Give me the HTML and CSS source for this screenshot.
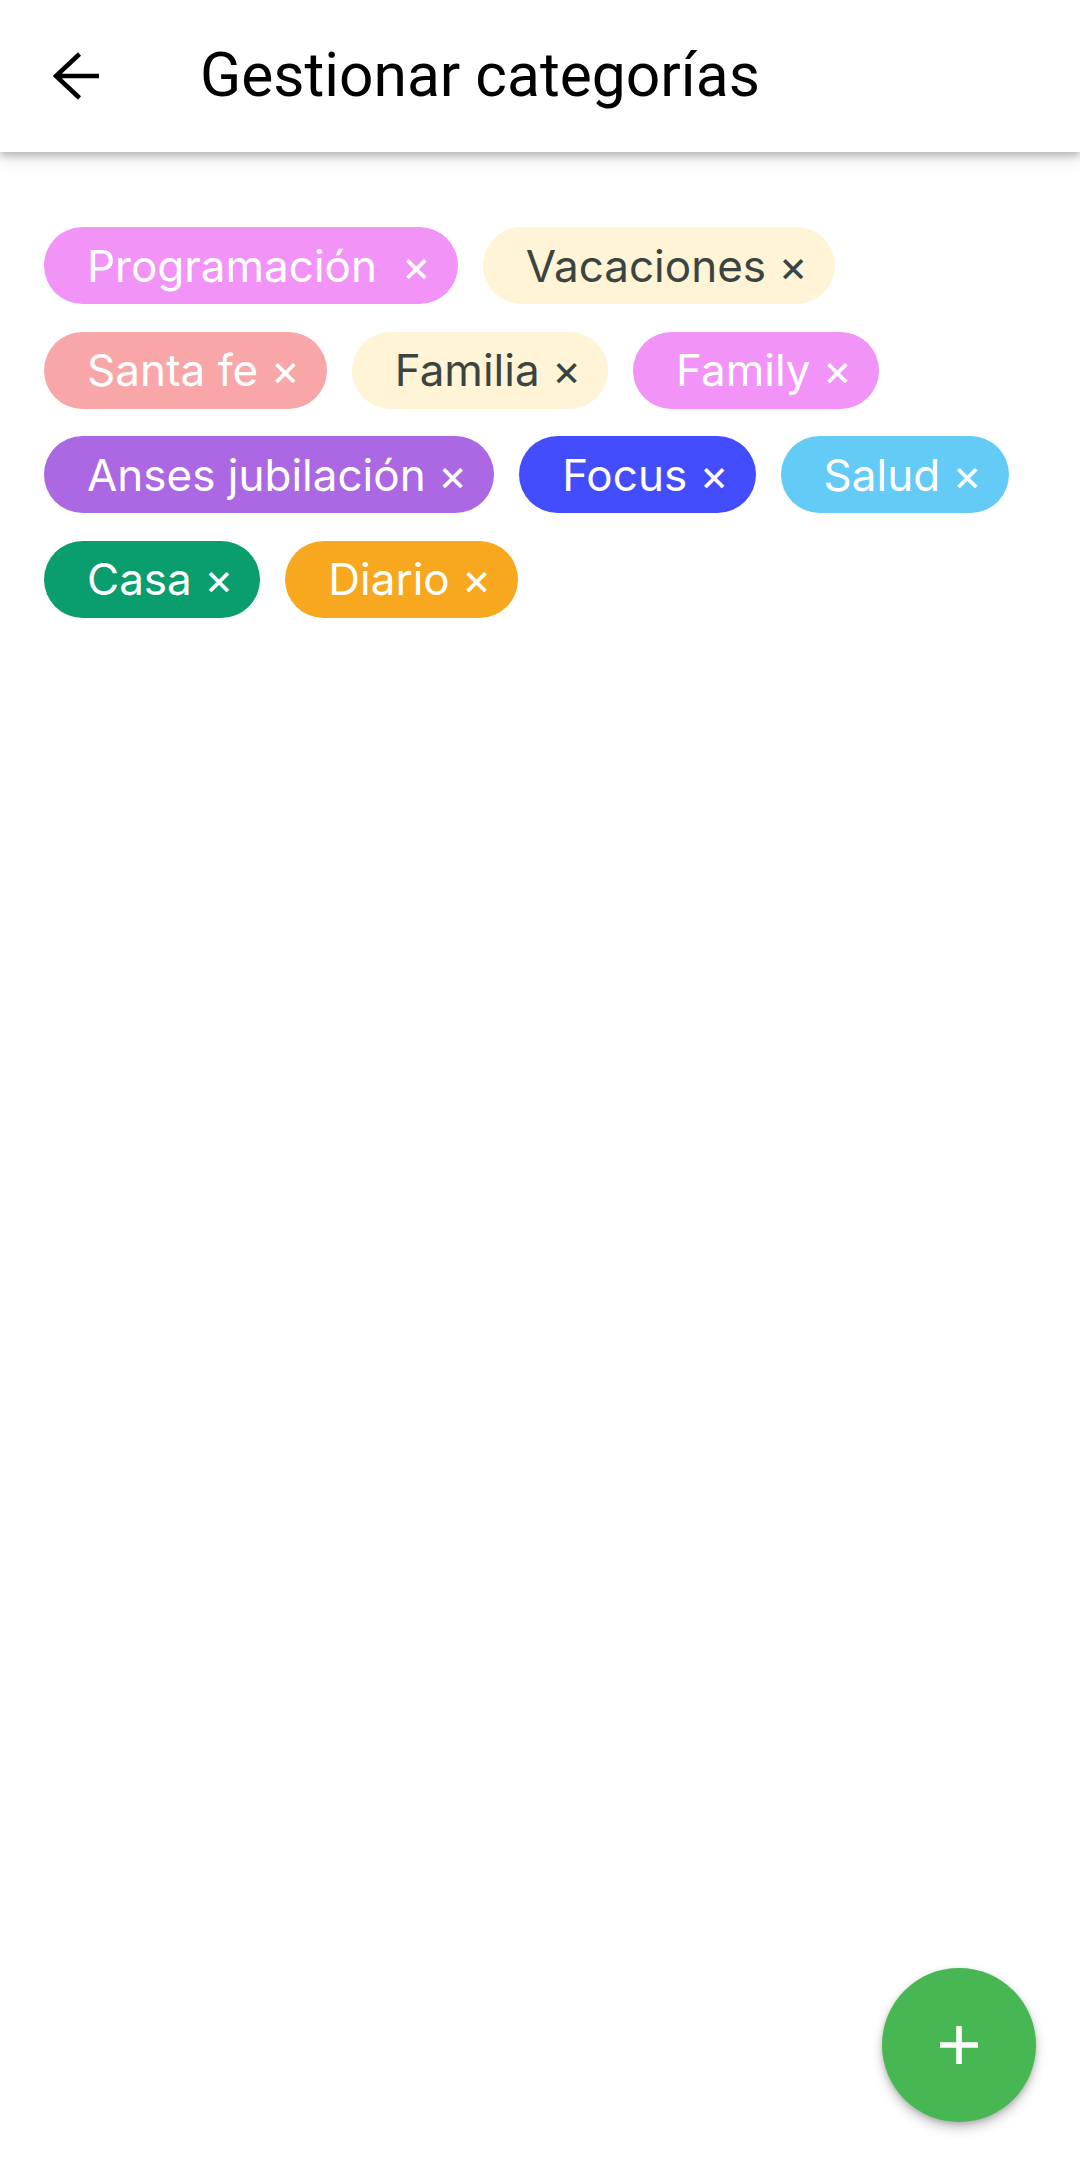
FILE: index.html
```html
<!DOCTYPE html>
<html lang="es">
<head>
<meta charset="utf-8">
<title>Gestionar categorías</title>
<link rel="stylesheet" href="styles.css">
</head>
<body>
<div class="screen">
  <header class="appbar">
    <div class="back">
      <svg width="66" height="66" viewBox="0 0 66 66" aria-hidden="true">
        <path d="M55 33 H12 M35.5 11 L12 33 L35.5 55" fill="none" stroke="#000" stroke-width="4.5" stroke-linecap="butt" stroke-linejoin="miter"/>
      </svg>
    </div>
    <h1 class="title">Gestionar categorías</h1>
  </header>
  <main class="content">
    <div class="chips">
      <span class="chip pink">Programación&nbsp; ×</span>
      <span class="chip cream">Vacaciones ×</span>
      <span class="chip salmon">Santa fe ×</span>
      <span class="chip cream">Familia ×</span>
      <span class="chip pink">Family ×</span>
      <span class="chip purple">Anses jubilación ×</span>
      <span class="chip blue">Focus ×</span>
      <span class="chip sky">Salud ×</span>
      <span class="chip green">Casa ×</span>
      <span class="chip orange">Diario ×</span>
    </div>
  </main>
  <button class="fab" aria-label="Agregar">
    <svg width="40" height="40" viewBox="0 0 40 40" aria-hidden="true">
      <path d="M20 1 V39 M1 20 H39" stroke="#fff" stroke-width="5.6"/>
    </svg>
  </button>
</div>
</body>
</html>
```
FILE: styles.css
```css
* { box-sizing: border-box; }
html, body {
  margin: 0;
  padding: 0;
  background: #fff;
}
.screen {
  position: relative;
  width: 1080px;
  height: 2157px;
  background: #fff;
  overflow: hidden;
}
.appbar {
  display: flex;
  align-items: center;
  height: 152px;
  padding-left: 44px;
  background: #fff;
  box-shadow: 0 4px 7px rgba(0,0,0,0.22), 0 9px 16px rgba(0,0,0,0.09);
  position: relative;
  z-index: 2;
}
.back {
  width: 66px;
  height: 66px;
  display: flex;
}
.title {
  margin: 0 0 0 90px;
  font-family: Roboto, "Noto Sans", sans-serif;
  font-weight: 400;
  font-size: 60.5px;
  color: #000;
  letter-spacing: 0;
  line-height: 1;
}
.content {
  padding: 75px 44px 0 44px;
}
.chips {
  display: flex;
  flex-wrap: wrap;
  column-gap: 25px;
  row-gap: 27.6px;
}
.chip {
  display: inline-flex;
  align-items: center;
  height: 77px;
  padding: 0 27px 0 43px;
  border-radius: 38.5px;
  font-family: Inter, "Noto Sans", sans-serif;
  font-size: 44px;
  color: #fff;
  white-space: pre;
}
.pink { background: #f293f8; }
.cream { background: #fff4d6; color: #3c4442; }
.salmon { background: #f9a6a9; }
.purple { background: #ab68e2; }
.blue { background: #444dfe; }
.sky { background: #64cbf6; }
.green { background: #0a9d6d; }
.orange { background: #f8a81e; }
.fab {
  position: absolute;
  right: 44px;
  bottom: 35px;
  width: 154px;
  height: 154px;
  border: none;
  border-radius: 50%;
  background: #47b753;
  display: flex;
  align-items: center;
  justify-content: center;
  box-shadow: 0 6px 12px rgba(0,0,0,0.22), 0 2px 5px rgba(0,0,0,0.15);
  padding: 0;
}
```
